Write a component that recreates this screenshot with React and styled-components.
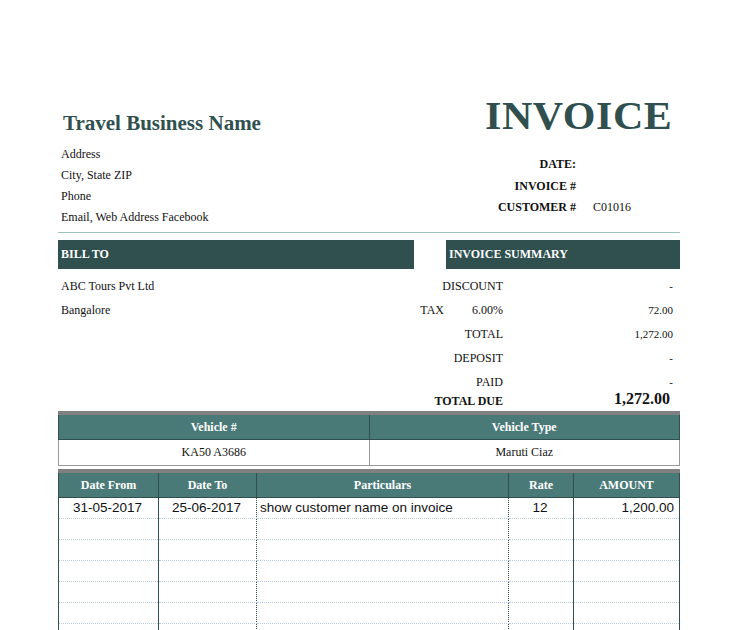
import React from "react";
import styled, { createGlobalStyle } from "styled-components";

const G = createGlobalStyle`
  body { margin: 0; background: #fff; font-family: "Liberation Serif", serif; color: #111; }
`;
const DARK = "#2f504f";
const MID = "#4a7a78";

const Page = styled.div`width: 738px; height: 630px; overflow: hidden; box-sizing: border-box; padding: 98px 58px 0 58px;`;
const Top = styled.div`display: flex; justify-content: space-between; align-items: flex-end; height: 38px; padding: 0 8px 0 5px;`;
const Name = styled.div`font-size: 21px; font-weight: bold; color: ${DARK}; line-height: 1; margin-bottom: 2px;`;
const Title = styled.div`font-size: 40px; font-weight: bold; color: ${DARK}; line-height: 1; letter-spacing: 0.5px; transform: scaleX(1.05); transform-origin: right;`;
const Info = styled.div`display: flex; justify-content: space-between; margin-top: 8px; padding-bottom: 4px; border-bottom: 1px solid #9cc4c0; font-size: 12px;`;
const Lines = styled.div`display: flex; flex-direction: column; padding-left: 3px;`;
const L = styled.div`height: 21px; line-height: 21px;`;
const Meta = styled.div`display: grid; grid-template-columns: 120px 104px; padding-top: 10px; grid-auto-rows: 21.5px; align-items: center;`;
const MK = styled.div`text-align: right; font-weight: bold;`;
const MV = styled.div`padding-left: 17px;`;
const Mid = styled.div`display: flex; justify-content: space-between; margin-top: 7px;`;
const Bar = styled.div`background: ${DARK}; color: #fff; font-weight: bold; font-size: 12px; height: 29px; display: flex; align-items: center; padding-left: 3px; width: ${p => p.w}px; box-sizing: border-box;`;
const Body = styled.div`display: flex; justify-content: space-between; font-size: 12px;`;
const Bill = styled.div`padding: 10px 0 0 3px; display: flex; flex-direction: column; gap: 9px;`;
const Sum = styled.div`display: grid; grid-template-columns: 28px 59px 170px; grid-auto-rows: 24px; align-items: center; padding-top: 5px; margin-right: 7px;`;
const SK = styled.div`grid-column: ${p => p.span ? "1 / 3" : "auto"}; text-align: right; font-weight: ${p => p.b ? "bold" : "normal"};`;
const SV = styled.div`text-align: right; font-weight: ${p => p.b ? "bold" : "normal"}; font-size: ${p => p.big ? "16px" : "11px"}; padding-right: ${p => p.big ? 3 : 0}px;`;
const Tbl = styled.table`width: 100%; border-collapse: collapse; border-top: 4px solid #808080; margin-top: ${p => p.mt}px; table-layout: fixed;`;
const Th = styled.th`background: ${MID}; color: #fff; font-size: 12px; font-weight: bold; height: 24px; border: 1px solid #2f504f; border-top: none; padding: 0;`;
const Td = styled.td`font-size: 12px; height: 25px; text-align: center; border: 1px solid #999; padding: 0;`;
const Rd = styled.td`font-family: "Liberation Sans", Arial, sans-serif; font-size: 13.5px; height: 20px; padding: 0 5px 0 3px; text-align: ${p => p.a || "center"}; border-left: 1px ${p => p.solid ? "solid #2f504f" : "dotted #2f504f"}; border-right: 1px ${p => p.solid ? "solid #2f504f" : "dotted #2f504f"}; border-bottom: 1px dotted #bcd; vertical-align: top; line-height: 20px;`;

const rows = [["31-05-2017", "25-06-2017", "show customer name on invoice", "12", "1,200.00"], ...Array(6).fill(["", "", "", "", ""])];

export default function App() {
  return (
    <Page>
      <G />
      <Top><Name>Travel Business Name</Name><Title>INVOICE</Title></Top>
      <Info>
        <Lines><L>Address</L><L>City, State ZIP</L><L>Phone</L><L>Email, Web Address Facebook</L></Lines>
        <Meta>
          <MK>DATE:</MK><MV></MV>
          <MK>INVOICE #</MK><MV></MV>
          <MK>CUSTOMER #</MK><MV>C01016</MV>
        </Meta>
      </Info>
      <Mid><Bar w={356}>BILL TO</Bar><Bar w={234}>INVOICE SUMMARY</Bar></Mid>
      <Body>
        <Bill><div>ABC Tours Pvt Ltd</div><div>Bangalore</div></Bill>
        <Sum>
          <SK span>DISCOUNT</SK><SV>-</SV>
          <SK>TAX</SK><SV style={{ fontSize: 12 }}>6.00%</SV><SV>72.00</SV>
          <SK span>TOTAL</SK><SV>1,272.00</SV>
          <SK span>DEPOSIT</SK><SV>-</SV>
          <SK span>PAID</SK><SV>-</SV>
          <SK span b style={{ alignSelf: "start" }}>TOTAL DUE</SK><SV b big style={{ alignSelf: "start", marginTop: -4 }}>1,272.00</SV>
        </Sum>
      </Body>
      <Tbl mt={-7}>
        <thead><tr><Th>Vehicle #</Th><Th>Vehicle Type</Th></tr></thead>
        <tbody><tr><Td>KA50 A3686</Td><Td>Maruti Ciaz</Td></tr></tbody>
      </Tbl>
      <Tbl mt={3}>
        <colgroup><col style={{ width: 100 }} /><col style={{ width: 98 }} /><col style={{ width: 252 }} /><col style={{ width: 65 }} /><col /></colgroup>
        <thead><tr><Th>Date From</Th><Th>Date To</Th><Th>Particulars</Th><Th>Rate</Th><Th>AMOUNT</Th></tr></thead>
        <tbody>
          {rows.map((r, i) => (
            <tr key={i}>
              <Rd solid>{r[0]}</Rd><Rd>{r[1]}</Rd><Rd a="left">{r[2]}</Rd><Rd>{r[3]}</Rd><Rd a="right" solid>{r[4]}</Rd>
            </tr>
          ))}
        </tbody>
      </Tbl>
    </Page>
  );
}
